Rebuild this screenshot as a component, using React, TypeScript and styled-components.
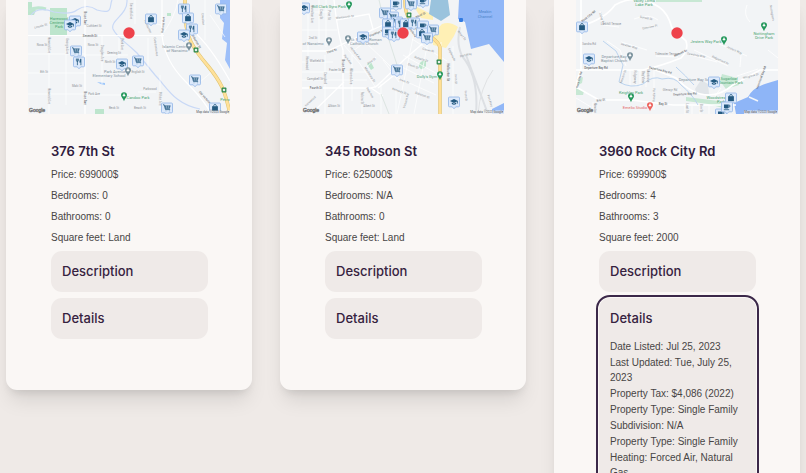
import React, { useId, useState } from "react";
import styled, { createGlobalStyle } from "styled-components";

const GlobalStyle = createGlobalStyle`
  *, *::before, *::after { box-sizing: border-box; }
  html { scrollbar-width: none; }
  body {
    margin: 0;
    background: #efeae7;
    color: #484545;
    font-family: "Liberation Sans", Arial, sans-serif;
    font-size: 10px;
    line-height: 15px;
  }
`;

const Listings = styled.main`
  display: grid;
  grid-template-columns: repeat(3, minmax(0, 1fr));
  align-items: start;
  gap: 28px;
  padding: 0 6px 28px;
`;

const Card = styled.article`
  border-radius: 0 0 11px 11px;
  background: #faf7f5;
  box-shadow: 0 14px 20px -4px rgba(0, 0, 0, 0.1), 0 6px 8px -4px rgba(0, 0, 0, 0.1);
`;

const MapFigure = styled.figure`
  margin: 0;
  padding: 0 22px;
`;

const MapImage = styled.svg`
  display: block;
  width: 100%;
  height: auto;
  overflow: hidden;
  background: #f2f4f6;
`;

const CardBody = styled.div`
  display: flex;
  flex-direction: column;
  gap: 6px;
  padding: 28px 44px 51px 45px;
`;

const Title = styled.h2`
  margin: 0;
  color: #2f1b3d;
  font-family: Inter, sans-serif;
  font-size: 13px;
  font-weight: 600;
  line-height: 19px;
`;

const Fact = styled.p`
  margin: 0;
`;

const Collapse = styled.section<{ $open: boolean }>`
  border-radius: 11px;
  background: #efeae8;
  outline: ${(p) => (p.$open ? "2px solid #3b2849" : "none")};
  outline-offset: 1px;
`;

const CollapseToggle = styled.button`
  display: block;
  width: 100%;
  padding: 11px;
  border: 0;
  border-radius: 11px;
  background: transparent;
  color: #36223f;
  font-family: Inter, sans-serif;
  font-size: 13px;
  font-weight: 500;
  line-height: 19px;
  text-align: left;
  cursor: pointer;
  &:focus { outline: none; }
  &:focus-visible { outline: 2px solid #3b2849; outline-offset: 1px; }
`;

const DetailList = styled.ul<{ $open: boolean }>`
  display: ${(p) => (p.$open ? "flex" : "none")};
  flex-direction: column;
  gap: 1px;
  margin: 0;
  padding: 0 11px 11px;
  list-style: none;
`;

type PoiKind = "cart" | "school" | "bag" | "fork" | "cup";
type Point = [number, number];

const poiShapes: Record<PoiKind, { fill?: string; line: string }> = {
  cart: { line: "M-4-3.2h1.2l1.3 4.8h4.6M-1.2 2.9h.4M2.3 2.9h.4", fill: "M-2.4-2.5h6l-.9 3.2h-4.3z" },
  school: { line: "M3.4-1v2.6", fill: "M-4-1L0-3L4-1L0 1zM-2.2.6L0 1.7L2.2.6v1.3Q0 3.4-2.2 1.9z" },
  bag: { line: "M-1.3-1.4v-.9q0-1.2 1.3-1.2t1.3 1.2v.9", fill: "M-2.9-1.8h5.8v5h-5.8z" },
  fork: { line: "M-2.6-3.4v1.8q0 1.1 1 1.1t1-1.1v-1.8M-1.6-3.4v6.6M1.9 3.2v-6.4", fill: "M1.9-3.4q-1.5.6-1.5 3.8h1.5z" },
  cup: { line: "M1.4-1.8h1.4v1.8h-1.4M-3.2 2.7h5.4", fill: "M-3-2.6h4.6v3.6q-2.3 1.2-4.6 0z" },
};

function Poi({ kind, at }: { kind: PoiKind; at: Point }) {
  const { fill, line } = poiShapes[kind];
  return (
    <g transform={`translate(${at[0]} ${at[1]})`}>
      <path d="M-4.5-5h9q1 0 1 1v7.8q0 1-1 1h-2.7L0 6.8L-1.8 4.8h-2.7q-1 0-1-1V-4q0-1 1-1z" fill="#dce9fb" stroke="#92b5e7" strokeWidth=".8" />
      <path d={fill} fill="#245a80" />
      <path d={line} fill="none" stroke="#245a80" strokeWidth=".8" />
      {kind === "cart" && <path d="M-.6-2.3L-.3.5M1.4-2.3V.5M-2-1h5.2" fill="none" stroke="#dce9fb" strokeWidth=".4" />}
    </g>
  );
}

function Marker({ at, color = "#22975a" }: { at: Point; color?: string }) {
  return (
    <g transform={`translate(${at[0]} ${at[1]})`}>
      <path d="M0 4.2C-.6 2.2-3-.2-3-1.7a3 3 0 0 1 6 0C3-.2.6 2.2 0 4.2z" fill={color} />
      <path d="M0-3.5l1.3 2.4h-2.6zM0-1.2v1.4" fill="#fff" stroke="#fff" strokeWidth=".4" />
    </g>
  );
}

function RouteShield({ at }: { at: Point }) {
  return (
    <g transform={`translate(${at[0]} ${at[1]})`}>
      <rect x="-2.4" y="-2.4" width="4.8" height="4.8" rx=".6" fill="#328b50" />
      <path d="M0-1.5L1.5 0L0 1.5L-1.5 0z" fill="#fff" />
    </g>
  );
}

type LabelTone = "road" | "main" | "place" | "park" | "water" | "shop";
const tones: Record<LabelTone, string> = {
  road: "#8e9398",
  main: "#6b6f73",
  place: "#84939e",
  park: "#4aa472",
  water: "#4b83c9",
  shop: "#e46464",
};

const MapText = styled.text<{ $tone: LabelTone }>`
  fill: ${(p) => tones[p.$tone]};
  font-family: Roboto, sans-serif;
  font-size: ${(p) => (p.$tone === "road" || p.$tone === "main" ? 3 : 4)}px;
  font-weight: ${(p) => (p.$tone === "main" ? 500 : 400)};
  text-anchor: middle;
`;

interface LabelData { text: string; at: Point; tone?: LabelTone; turn?: number }

function Labels({ items }: { items: LabelData[] }) {
  return (
    <>
      {items.map(({ text, at, tone = "road", turn = 0 }, i) => (
        <MapText key={i} $tone={tone} transform={`translate(${at[0]} ${at[1]}) rotate(${turn})`}>{text}</MapText>
      ))}
    </>
  );
}

const GoogleMark = styled.text`
  fill: #c6c4c0;
  stroke: #77777a;
  stroke-width: 0.5px;
  font-family: "Liberation Sans", sans-serif;
  font-size: 5px;
`;

const Attribution = styled.text`
  fill: #50545a;
  font-family: Roboto, sans-serif;
  font-size: 3px;
  text-anchor: end;
`;

function MapFrame({ label, children }: { label: string; children: React.ReactNode }) {
  return (
    <MapImage viewBox="0 0 202 114" role="img" aria-label={label}>
      {children}
      <circle cx="101" cy="33" r="5.7" fill="#ee424b" />
      <GoogleMark x="1" y="112">Google</GoogleMark>
      <rect x="168" y="110.5" width="34" height="3.5" fill="#f5f6f6" opacity=".75" />
      <Attribution x="201" y="113">Map data ©2023 Google</Attribution>
    </MapImage>
  );
}

function SeventhStreetMap() {
  return (
    <MapFrame label="Map around 376 7th St">
      <path d="M22 8h17v27H22zM0 2h4v8h4l-2 5H0zM67 109h9v5h-9zM139 13h4v3h-4z" fill="#bde5cd" />
      <path d="M192 0h10v69l-5-9 2-17-5-4 2-16-4-5z" fill="#9dbff9" />
      <path d="M69 82l8 1v2q-4 0-8-3z" fill="#9ec7fa" />
      <path d="M0 11q7-5 18-2" fill="none" stroke="#bfe6d0" strokeWidth="3" />
      <path d="M3 15Q10 6 26 12q17 3 23-2 10-7 20 0c17 5 12-4 15-10M99 0c1 15-17 20-14 29 4 9 12 12 24 24l18 22c12 12 19 29 45 34" fill="none" stroke="#c9d9f6" strokeWidth="1.2" />
      <g fill="none" stroke="#fff">
        <path d="M57 0v114M0 35.5h136M134 0v36q3 25 23 45t26 33M164 30q18 15 38 51" strokeWidth="1.2" />
        <path d="M21 35v79M38 35v70M74 36v48M91 36v28M107 0v24M121 10v12l12 3M0 54h57M0 73h57M0 94h57M57 55h43M57 95h45M120 38v31M133 36q14-18 17-36M177 0v40M110 92h18M132 75v34M182 15l15 22M172 82l14-12" strokeWidth=".7" />
      </g>
      <path d="M157 0q-1 28 6 42 5 10 17 24c13 16 17 24 22 48" fill="none" stroke="#dec371" strokeWidth="3.6" />
      <path d="M157 0q-1 28 6 42 5 10 17 24c13 16 17 24 22 48" fill="none" stroke="#ffe19a" strokeWidth="2.6" />
      <Labels items={[
        { text: "Harewood", at: [31, 20], tone: "park" }, { text: "Centennial", at: [31, 24], tone: "park" }, { text: "Park", at: [31, 28], tone: "park" },
        { text: "Lincoln St", at: [13, 27], turn: -15 }, { text: "Seventh St", at: [62, 37], tone: "main" },
        { text: "Cuthbert St", at: [66, 27] }, { text: "Bruce Ave", at: [56, 18], tone: "main", turn: 90 },
        { text: "Howard Ave", at: [20, 45], turn: 90 }, { text: "Georgia Ave", at: [38, 46], turn: 90 },
        { text: "Nova St", at: [14, 46] }, { text: "Nova St", at: [65, 46] }, { text: "8th St", at: [16, 73] },
        { text: "Douglas Ave", at: [73, 53], turn: 90 }, { text: "Deering St", at: [86, 54] }, { text: "Ninth St", at: [82, 63] },
        { text: "Maki St", at: [49, 87] }, { text: "Park Ave", at: [66, 95] }, { text: "Howard Ave", at: [20, 96], turn: 90 },
        { text: "Bruce Ave", at: [56, 98], tone: "main", turn: 90 }, { text: "Park Avenue", at: [87, 73], tone: "place" },
        { text: "Elementary School", at: [81, 77], tone: "place" }, { text: "Beck St", at: [86, 109] }, { text: "Park Ave", at: [93, 44], turn: 90 },
        { text: "Haliburton", at: [119, 27], turn: 65 }, { text: "Railway Ave", at: [136, 25], tone: "main", turn: -85 },
        { text: "Old Victoria", at: [176, 98], tone: "main", turn: 47 }, { text: "Cinnabar", at: [174, 19], turn: 85 },
        { text: "Islamic Centre", at: [147, 48], tone: "place" }, { text: "of Nanaimo", at: [149, 52], tone: "place" },
        { text: "Caledonia Ave", at: [127, 47], turn: 83 }, { text: "English St", at: [110, 73] }, { text: "Parkwood", at: [122, 90] },
        { text: "Candoo Park", at: [110, 99], tone: "park" }, { text: "Beach St", at: [112, 109] },
        { text: "Haliburton St", at: [167, 41], tone: "main", turn: 60 }, { text: "Petro", at: [197, 101], tone: "park" },
        { text: "White Ave", at: [131, 99], turn: 90 }, { text: "Seventh Ave", at: [102, 11], turn: 90 },
      ]} />
      <Poi kind="school" at={[47, 21]} /><Poi kind="school" at={[42, 25]} />
      <Poi kind="cart" at={[48, 51]} /><Poi kind="fork" at={[51, 62]} />
      <Poi kind="school" at={[94, 64]} /><Poi kind="cart" at={[110, 61]} />
      <Poi kind="bag" at={[123, 19]} /><Poi kind="fork" at={[156, 9]} />
      <Poi kind="bag" at={[160, 18]} /><Poi kind="fork" at={[164, 29]} />
      <Poi kind="school" at={[156, 35]} /><Poi kind="cart" at={[193, 9]} />
      <Poi kind="cart" at={[167, 80]} /><Poi kind="cart" at={[139, 108]} /><Poi kind="bag" at={[187, 108]} />
      <Marker at={[100, 72]} color="#78909c" /><Marker at={[161, 47]} color="#78909c" />
      <Marker at={[96, 97]} /><RouteShield at={[168, 50]} /><RouteShield at={[196, 90]} />
    </MapFrame>
  );
}

function RobsonStreetMap() {
  return (
    <MapFrame label="Map around 345 Robson St">
      <path d="M130 35l10-11q8-3 16 3l-4 9-8 12-13-3zM111 5l20 10v5l-12-2z" fill="#fff0b5" />
      <path d="M157 0h45v62l-15-18-18 5-6-27-7-3zM190 109l12-6v11h-12z" fill="#91b7f7" />
      <path d="M129 0h17l2 15-9 6-12-7z" fill="#9ac3dd" />
      <path d="M117 65q2-5 7-4v5q-4 6-7 1zM65 64l4-2 3 6-3 2z" fill="#bde5cd" />
      <g fill="none" stroke="#fff">
        <path d="M32 0q4 35 9 50v64M0 88h61q12 1 16-4L104 58l29-25M0 51h26L66 32l28-13M9 114L42 82M69 88l12 8M46 45L71 29l-4-15L34 20M95 64l-4 12-15 12" strokeWidth="1.3" />
        <path d="M6 0v61M17 0v46M24 0v47M0 12h30M0 30h35M0 62h31M0 72h65M0 80h65M23 55v59M50 55v46M60 91v23M42 45l16 19 16 24M51 51l12-9 19 18 10 10M64 68l10-11M81 60l16 22M79 84v30M94 89v25M110 39l35 22M101 55l38 21M98 66l34 17M94 77l40 18M112 33l-17 81M126 41l-14 73M139 42v72M151 46v68" strokeWidth=".7" />
      </g>
      <path d="M77 0l9 37 10 31M79 94l8 20" fill="none" stroke="#d6e1dc" strokeWidth=".8" />
      <path d="M158 27q-4 16 2 29 17 20 14 58M164 55l22 59" fill="none" stroke="#dde0e4" strokeWidth="2" />
      <path d="M176 114q2-26 15-44" fill="none" stroke="#e0e2e4" strokeWidth="1" />
      <path d="M103 0q-1 21 18 33 16 7 17 15v66" fill="none" stroke="#d9bd6c" strokeWidth="3.4" />
      <path d="M103 0q-1 21 18 33 16 7 17 15v66" fill="none" stroke="#ffdf95" strokeWidth="2.5" />
      <Labels items={[
        { text: "Gill Clark Gyro Park", at: [27, 8], tone: "park" }, { text: "Wentworth St", at: [43, 18], turn: -7 },
        { text: "Hamilton Ave", at: [9, 14], turn: 90 }, { text: "Craig St", at: [18, 14], turn: 90 }, { text: "Pine St", at: [26, 15], turn: 90 },
        { text: "2nd St", at: [11, 39] }, { text: "of Nanaimo", at: [11, 45], tone: "place" }, { text: "St. Peter's Roman", at: [64, 41], tone: "place" },
        { text: "Catholic Church", at: [62, 45], tone: "place" }, { text: "Third St", at: [30, 52], tone: "main", turn: -18 },
        { text: "Franklyn St", at: [75, 34], tone: "main", turn: -23 }, { text: "Watfield St", at: [15, 62] }, { text: "Harewood", at: [4, 63], turn: 90 },
        { text: "Bruce Ave", at: [40, 66], tone: "main", turn: 90 }, { text: "Foster St", at: [33, 71] }, { text: "Campbell", at: [22, 78], turn: 90 },
        { text: "Hillcrest Ave", at: [48, 76], turn: 90 }, { text: "Howard Ave", at: [53, 54], turn: 52 }, { text: "Park Ave", at: [45, 60], turn: 52 },
        { text: "Pine St", at: [70, 62], turn: -35 }, { text: "Machleary St", at: [67, 75], turn: 57 }, { text: "Campbell St", at: [13, 80] },
        { text: "Fourth St", at: [14, 89], tone: "main" }, { text: "Albion St", at: [32, 107] }, { text: "Robins St", at: [59, 98], turn: 90 },
        { text: "Albert St", at: [67, 107] }, { text: "Harewood", at: [9, 102], turn: -43 }, { text: "Park Ave", at: [67, 93], turn: 60 },
        { text: "Kennedy St", at: [97, 92], turn: 20 }, { text: "Nicol St", at: [119, 16], tone: "main", turn: -25 },
        { text: "Victoria", at: [110, 33], tone: "main", turn: 55 }, { text: "Cavan St", at: [126, 51], turn: 15 },
        { text: "Roberta St", at: [119, 60], turn: 18 }, { text: "Dixon St", at: [111, 67], turn: 20 },
        { text: "Irwin St", at: [102, 82], turn: 22 }, { text: "Sabiston St", at: [120, 96], turn: 20 },
        { text: "Victoria Rd", at: [105, 101], turn: -75 }, { text: "Dolly's Gym", at: [125, 78], tone: "park" },
        { text: "Haliburton St", at: [145, 72], tone: "main", turn: 90 }, { text: "Esplanade", at: [149, 55], turn: 65 },
        { text: "Port Way", at: [164, 56], turn: -14 }, { text: "Irwin St", at: [153, 79], turn: 88 }, { text: "Front St", at: [163, 96], turn: 85 },
        { text: "Port Way", at: [187, 101], turn: 72 }, { text: "Wharf St", at: [159, 36], turn: 50 },
        { text: "Meakin", at: [183, 13], tone: "water" }, { text: "Channel", at: [183, 18], tone: "water" },
      ]} />
      <Poi kind="school" at={[2, 8]} /><Marker at={[47, 6]} />
      <Marker at={[27, 42]} color="#78909c" /><Marker at={[46, 40]} color="#78909c" />
      <Poi kind="school" at={[61, 37]} /><Poi kind="cup" at={[94, 4]} /><Poi kind="cart" at={[109, 4]} /><Poi kind="cup" at={[121, 1]} />
      <Poi kind="cart" at={[83, 13]} /><Poi kind="cart" at={[91, 17]} /><Poi kind="cart" at={[95, 22]} />
      <Poi kind="bag" at={[86, 24]} /><Poi kind="cup" at={[86, 32]} /><Poi kind="fork" at={[92, 35]} />
      <Poi kind="fork" at={[99, 24]} /><Poi kind="bag" at={[104, 24]} /><Poi kind="fork" at={[112, 23]} />
      <Poi kind="cup" at={[121, 26]} /><Poi kind="cart" at={[131, 30]} /><Poi kind="bag" at={[120, 33]} />
      <Poi kind="cart" at={[125, 38]} /><Poi kind="cart" at={[95, 70]} /><Poi kind="school" at={[152, 102]} />
      <RouteShield at={[107, 15]} /><RouteShield at={[137, 62]} /><Marker at={[138, 76]} />
      <rect x="157" y="18" width="4" height="4" rx="1" fill="#337be0" />
    </MapFrame>
  );
}

function RockCityMap() {
  return (
    <MapFrame label="Map around 3960 Rock City Rd">
      <path d="M80 0h46v2H80zM0 88l8 3-1 4H0zM3 79l4-2-1 6-4 2zM146 74l15 4 2 7-13 4-6-8zM110 97l33 4 4 7-15-4-22-3z" fill="#c8e8d4" />
      <path d="M125 80l7 4 1 10h-12l-2-5z" fill="#e1e5e9" />
      <path d="M202 80v34h-42l-2-11 14-6q5-10 20-14z" fill="#8eb5f7" />
      <g fill="none" stroke="#fff">
        <path d="M5 0v69q-5 14-5 18l23 13h32l42 5h63M5 26q24-7 34-21 22-12 44 2 9 6 13 21l14 13q3 9-5 17-20 8-38 12H0M72 67l28 11q16 17 33 17 12 0 24-10l27-15h18" strokeWidth="1.7" />
        <path d="M24 11l3 14 16 2M58 19q15-6 24 1M66 29l13-4M31 41l13 9 6 16M45 42l26 8M80 56l22 1M54 70v16M60 70v17M70 70v17M64 70v17M78 70v40M111 54l30 8M118 50l34 16M143 44l28 12M165 55l-1 12M161 76l21-7M139 96l6-8M0 98l15 9M17 102v12M109 106v8M116 106v8M124 106v8M133 105v9M87 90h18M171 5q-4 10 3 17M192 50l10 8" strokeWidth=".8" />
      </g>
      <path d="M27 41l13 10 7 14-4 17q12 7 24 2 10-9 19-5 13-3 19 6 12 10 17 20M100 67q10 9 18 18" fill="none" stroke="#bcd4ef" strokeWidth="1" />
      <path d="M173 97l9 4" stroke="#f3f6f9" strokeWidth="1.5" />
      <Labels items={[
        { text: "Valley Loma", at: [68, 2], tone: "park" }, { text: "Lake Park", at: [68, 6], tone: "park" },
        { text: "Rock City Rd", at: [13, 17], tone: "main", turn: -38 }, { text: "Linley Rd", at: [25, 19], turn: 72 },
        { text: "Larkhill Terrace", at: [35, 25] }, { text: "Sunset Dr", at: [70, 19], turn: 12 }, { text: "Glenview Pl", at: [74, 28], turn: -12 },
        { text: "Sandra Rd", at: [13, 45] }, { text: "Heather Way", at: [53, 47], turn: 15 },
        { text: "Departure Bay", at: [38, 58], tone: "place" }, { text: "Baptist Church", at: [38, 62], tone: "place" },
        { text: "Departure Bay Rd", at: [20, 69], tone: "main" }, { text: "Departure Bay Rd", at: [84, 71], tone: "main", turn: 14 },
        { text: "Departure Bay Rd", at: [109, 95], tone: "main", turn: -3 }, { text: "Tidewater Terrace", at: [91, 55] },
        { text: "Rock City Rd", at: [4, 80], tone: "main", turn: -75 }, { text: "Newton St", at: [48, 77], turn: -70 },
        { text: "Ridgeway", at: [58, 77], turn: 90 }, { text: "Bay View", at: [66, 77], turn: 90 }, { text: "Montrose", at: [71, 76], turn: 90 },
        { text: "Keighley Park", at: [55, 94], tone: "park" }, { text: "Bay St", at: [25, 101], tone: "main", turn: -9 },
        { text: "Emelio Studio", at: [59, 109], tone: "shop" }, { text: "Bay St", at: [87, 105], tone: "main" },
        { text: "Randle Rd", at: [79, 95], turn: -88 }, { text: "Glenayr Rd", at: [94, 91] },
        { text: "Departure Bay Sch", at: [119, 81], tone: "place" }, { text: "Jesters Way Park", at: [130, 43], tone: "park" },
        { text: "Nottingham", at: [188, 35], tone: "park" }, { text: "Drive Park", at: [188, 39], tone: "park" },
        { text: "Dewdney Way", at: [120, 56], turn: 10 }, { text: "Ridgemont Dr", at: [144, 61], turn: 25 },
        { text: "Jesters Way", at: [158, 51], turn: 25 }, { text: "Nottingham", at: [195, 13], turn: 80 },
        { text: "Norwell Dr", at: [105, 54], tone: "main", turn: -25 }, { text: "Wingrove St", at: [175, 77], turn: -15 },
        { text: "Hammond Bay Rd", at: [186, 78], tone: "main", turn: -70 }, { text: "Sugarloaf", at: [153, 80], tone: "park" },
        { text: "Mountain Park", at: [154, 84], tone: "park" }, { text: "Woodstream", at: [142, 99], tone: "park" }, { text: "Park", at: [145, 103], tone: "park" },
        { text: "Newton", at: [18, 108], turn: 90 }, { text: "Loat St", at: [110, 108], turn: 90 }, { text: "Elm St", at: [124, 108], turn: 90 },
      ]} />
      <Poi kind="bag" at={[6, 27]} /><Poi kind="school" at={[13, 59]} />
      <Marker at={[54, 57]} color="#78909c" /><Marker at={[55, 98]} /><Marker at={[74, 107]} color="#ed5f59" />
      <Marker at={[148, 41]} /><Marker at={[188, 27]} />
      <Poi kind="school" at={[138, 82]} /><Poi kind="cup" at={[145, 114]} /><Poi kind="bag" at={[155, 98]} /><Poi kind="cup" at={[151, 107]} />
    </MapFrame>
  );
}

function CollapsePanel({ title, initiallyOpen = false, items }: { title: string; initiallyOpen?: boolean; items: string[] }) {
  const [open, setOpen] = useState(initiallyOpen);
  const panelId = useId();
  return (
    <Collapse $open={open}>
      <CollapseToggle type="button" aria-expanded={open} aria-controls={panelId} onClick={() => setOpen(!open)}>{title}</CollapseToggle>
      <DetailList id={panelId} $open={open}>
        {items.map((item, i) => <li key={i}>{item}</li>)}
      </DetailList>
    </Collapse>
  );
}

interface Listing {
  address: string;
  price: string;
  bedrooms: string;
  bathrooms: string;
  area: string;
  Map: () => React.JSX.Element;
  details: string[];
  detailsOpen?: boolean;
}

const listings: Listing[] = [
  { address: "376 7th St", price: "699000$", bedrooms: "0", bathrooms: "0", area: "Land", Map: SeventhStreetMap, details: [] },
  { address: "345 Robson St", price: "625000$", bedrooms: "N/A", bathrooms: "0", area: "Land", Map: RobsonStreetMap, details: [] },
  {
    address: "3960 Rock City Rd", price: "699900$", bedrooms: "4", bathrooms: "3", area: "2000", Map: RockCityMap, detailsOpen: true,
    details: [
      "Date Listed: Jul 25, 2023",
      "Last Updated: Tue, July 25, 2023",
      "Property Tax: $4,086 (2022)",
      "Property Type: Single Family",
      "Subdivision: N/A",
      "Property Type: Single Family",
      "Heating: Forced Air, Natural Gas",
    ],
  },
];

export default function App() {
  return (
    <>
      <GlobalStyle />
      <Listings>
        {listings.map(({ Map, ...home }) => (
          <Card key={home.address}>
            <MapFigure><Map /></MapFigure>
            <CardBody>
              <Title>{home.address}</Title>
              <Fact>Price: {home.price}</Fact>
              <Fact>Bedrooms: {home.bedrooms}</Fact>
              <Fact>Bathrooms: {home.bathrooms}</Fact>
              <Fact>Square feet: {home.area}</Fact>
              <CollapsePanel title="Description" items={[]} />
              <CollapsePanel title="Details" items={home.details} initiallyOpen={home.detailsOpen} />
            </CardBody>
          </Card>
        ))}
      </Listings>
    </>
  );
}
